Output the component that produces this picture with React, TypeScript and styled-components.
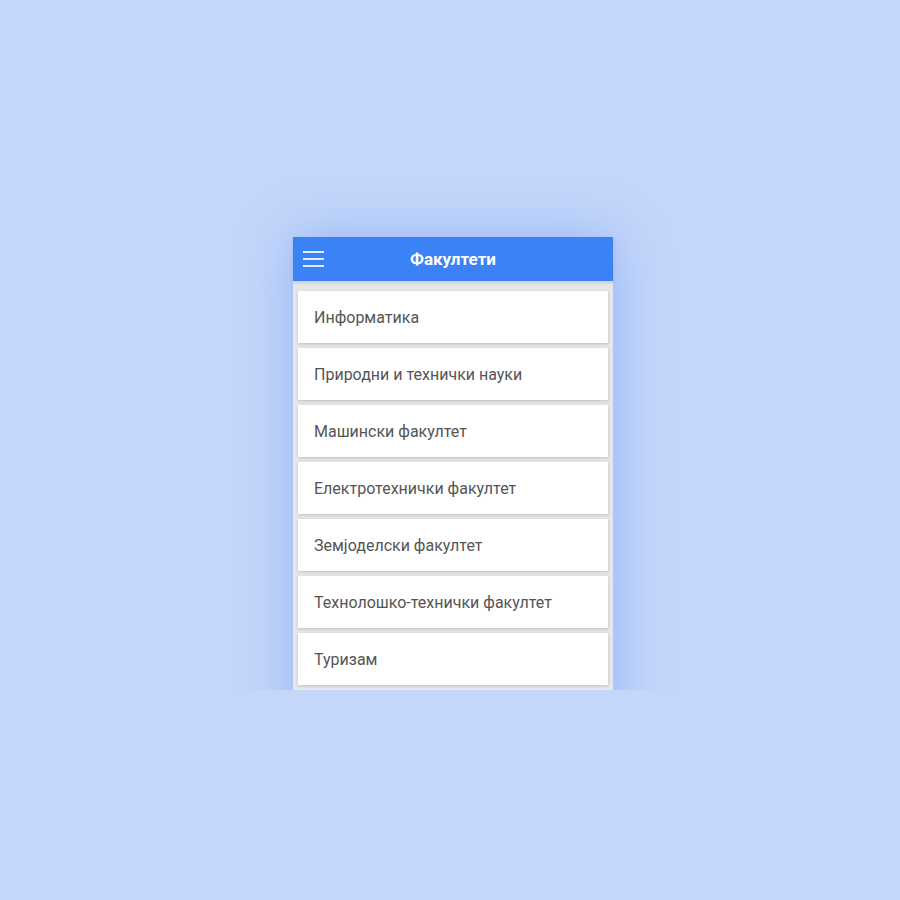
import React from 'react';
import styled, { createGlobalStyle } from 'styled-components';

const GlobalStyle = createGlobalStyle`
  html, body {
    margin: 0;
    padding: 0;
    background: #c4d7fa;
  }
  * {
    box-sizing: border-box;
  }
`;

const Stage = styled.div`
  height: 690px;
  overflow: hidden;
  display: flex;
  justify-content: center;
  padding-top: 237px;
  padding-left: 6px;
`;

const Phone = styled.div`
  width: 320px;
  height: 520px;
  background: #e6e7eb;
  box-shadow: 0 0 50px rgba(59, 110, 240, 0.34);
  display: flex;
  flex-direction: column;
  font-family: Roboto, "Liberation Sans", sans-serif;
`;

const Header = styled.header`
  height: 44px;
  background: #3b82f6;
  display: flex;
  align-items: center;
  position: relative;
  box-shadow: 0 2px 3px rgba(0, 0, 0, 0.12);
`;

const MenuButton = styled.button`
  position: absolute;
  left: 10px;
  top: 14px;
  width: 21px;
  height: 16px;
  padding: 0;
  border: none;
  background: transparent;
  display: flex;
  flex-direction: column;
  justify-content: space-between;
`;

const MenuLine = styled.span`
  display: block;
  height: 2px;
  background: rgba(255, 255, 255, 0.85);
`;

const Title = styled.h1`
  flex: 1;
  margin: 0;
  text-align: center;
  color: #ffffff;
  font-size: 17px;
  font-weight: 700;
`;

const List = styled.ul`
  list-style: none;
  margin: 0;
  padding: 10px 5px 0;
  display: flex;
  flex-direction: column;
  gap: 5px;
`;

const Item = styled.li`
  height: 52px;
  background: #ffffff;
  display: flex;
  align-items: center;
  padding-left: 16px;
  color: #555555;
  font-size: 16px;
  box-shadow: 0 1px 3px rgba(0, 0, 0, 0.18);
`;

const faculties = [
  'Информатика',
  'Природни и технички науки',
  'Машински факултет',
  'Електротехнички факултет',
  'Земјоделски факултет',
  'Технолошко-технички факултет',
  'Туризам',
];

const App: React.FC = () => (
  <>
    <GlobalStyle />
    <Stage>
      <Phone>
        <Header>
          <MenuButton aria-label="Мени">
            <MenuLine />
            <MenuLine />
            <MenuLine />
          </MenuButton>
          <Title>Факултети</Title>
        </Header>
        <List>
          {faculties.map(name => (
            <Item key={name}>{name}</Item>
          ))}
        </List>
      </Phone>
    </Stage>
  </>
);

export default App;
